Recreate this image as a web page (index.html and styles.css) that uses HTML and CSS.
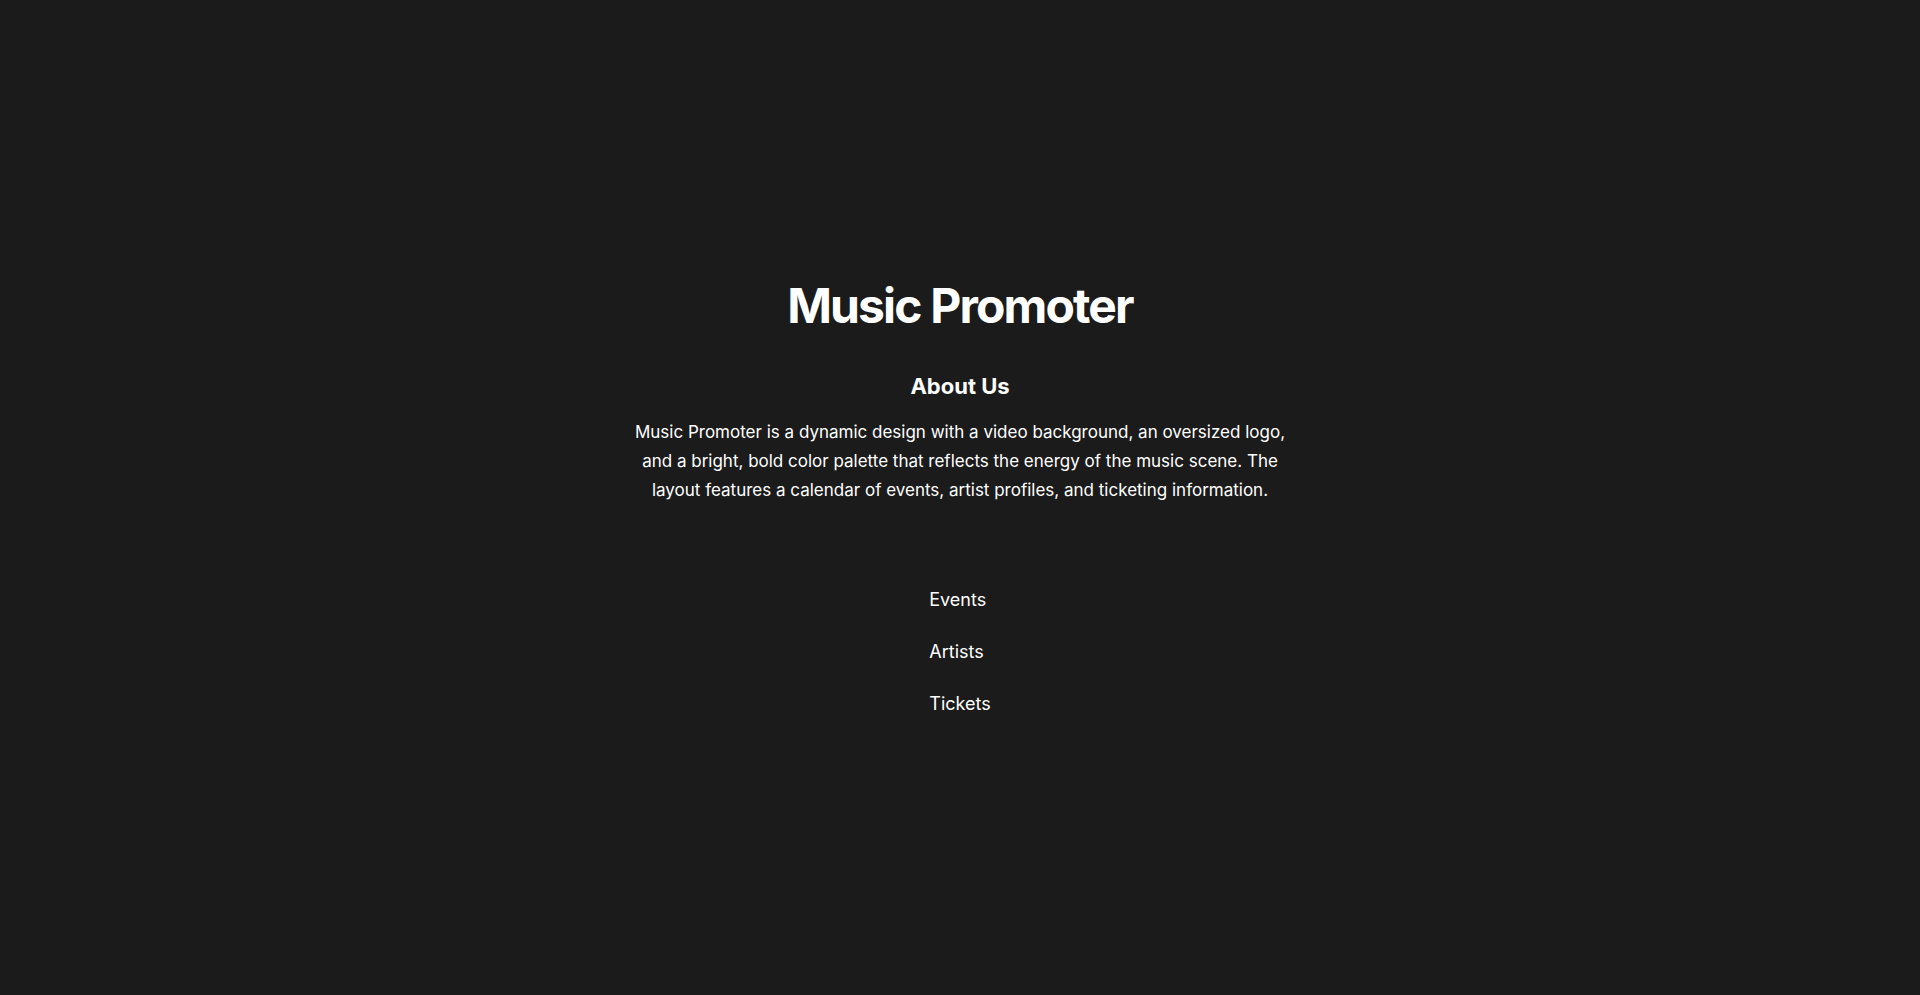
FILE: index.html
```html
<!DOCTYPE html>
<html lang="en">
<head>
<meta charset="utf-8">
<title>Music Promoter</title>
<link rel="stylesheet" href="styles.css">
</head>
<body>
<main class="page">
  <h1 class="title">Music Promoter</h1>
  <section class="about">
    <h2 class="about-heading">About Us</h2>
    <p class="about-text">Music Promoter is a dynamic design with a video background, an oversized logo, and a bright, bold color palette that reflects the energy of the music scene. The layout features a calendar of events, artist profiles, and ticketing information.</p>
  </section>
  <nav class="nav">
    <ul class="nav-list">
      <li><a class="nav-link" href="#">Events</a></li>
      <li><a class="nav-link" href="#">Artists</a></li>
      <li><a class="nav-link" href="#">Tickets</a></li>
    </ul>
  </nav>
</main>
</body>
</html>
```

FILE: styles.css
```css
* { box-sizing: border-box; }
html, body { margin: 0; padding: 0; }
body {
  background: #1b1b1b;
  color: #ffffff;
  font-family: Inter, "Noto Sans", sans-serif;
}
.page {
  min-height: 100vh;
  display: flex;
  flex-direction: column;
  align-items: center;
  justify-content: center;
  text-align: center;
}
.title {
  margin: 0 0 38px;
  font-size: 48px;
  line-height: 1.2;
  font-weight: 700;
  letter-spacing: -1.85px;
}
.about { display: flex; flex-direction: column; align-items: center; }
.about-heading {
  margin: 0 0 19px;
  font-size: 22px;
  line-height: 1.2;
  font-weight: 700;
}
.about-text {
  margin: 0 0 81px;
  max-width: 672px;
  font-size: 17px;
  line-height: 28.8px;
  letter-spacing: 0;
}
.nav-list {
  list-style: none;
  margin: 0;
  padding: 0;
  display: flex;
  flex-direction: column;
  align-items: flex-start;
  gap: 24px;
}
.nav-link {
  color: #ffffff;
  text-decoration: none;
  font-size: 18px;
  line-height: 28px;
  display: block;
}
```
